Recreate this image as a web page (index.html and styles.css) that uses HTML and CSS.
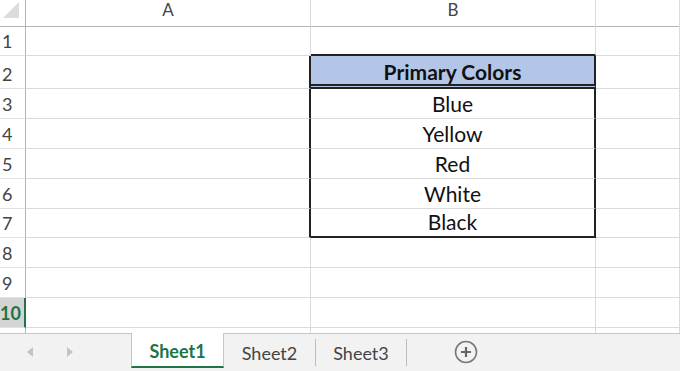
FILE: index.html
```html
<!DOCTYPE html>
<html lang="en">
<head>
  <meta charset="UTF-8" />
  <title>Primary Colors - Sheet1</title>
  <link rel="stylesheet" href="styles.css">
</head>
<body>

  <div class="app">

    <!-- worksheet grid -->
    <div class="sheet">
      <div class="row col-heads">
        <div class="cell corner">
          <svg width="18" height="18" viewBox="0 0 18 18"><polygon points="17,1 17,17 1,17" fill="#dcdcdc"/></svg>
        </div>
        <div class="cell col-head">A</div>
        <div class="cell col-head">B</div>
        <div class="cell col-head"></div>
      </div>

      <div class="row">
        <div class="cell row-head">1</div>
        <div class="cell"></div>
        <div class="cell box-top"></div>
        <div class="cell"></div>
      </div>

      <div class="row tall">
        <div class="cell row-head">2</div>
        <div class="cell box-left"></div>
        <div class="cell box title">Primary Colors</div>
        <div class="cell"></div>
      </div>

      <div class="row">
        <div class="cell row-head">3</div>
        <div class="cell box-left"></div>
        <div class="cell box">Blue</div>
        <div class="cell"></div>
      </div>

      <div class="row">
        <div class="cell row-head">4</div>
        <div class="cell box-left"></div>
        <div class="cell box">Yellow</div>
        <div class="cell"></div>
      </div>

      <div class="row">
        <div class="cell row-head">5</div>
        <div class="cell box-left"></div>
        <div class="cell box">Red</div>
        <div class="cell"></div>
      </div>

      <div class="row">
        <div class="cell row-head">6</div>
        <div class="cell box-left"></div>
        <div class="cell box">White</div>
        <div class="cell"></div>
      </div>

      <div class="row short">
        <div class="cell row-head">7</div>
        <div class="cell box-left"></div>
        <div class="cell box box-end">Black</div>
        <div class="cell"></div>
      </div>

      <div class="row">
        <div class="cell row-head">8</div>
        <div class="cell"></div>
        <div class="cell"></div>
        <div class="cell"></div>
      </div>

      <div class="row">
        <div class="cell row-head">9</div>
        <div class="cell"></div>
        <div class="cell"></div>
        <div class="cell"></div>
      </div>

      <div class="row">
        <div class="cell row-head active">10</div>
        <div class="cell"></div>
        <div class="cell"></div>
        <div class="cell"></div>
      </div>

      <div class="row">
        <div class="cell row-head"></div>
        <div class="cell"></div>
        <div class="cell"></div>
        <div class="cell"></div>
      </div>
    </div>

    <!-- sheet tabs -->
    <div class="tabs">
      <div class="tab-nav">
        <span class="arrow left"></span>
        <span class="arrow right"></span>
      </div>
      <div class="tab current">Sheet1</div>
      <div class="tab">Sheet2</div>
      <div class="tab sep">Sheet3</div>
      <div class="add-sheet">
        <svg width="24" height="24" viewBox="0 0 24 24">
          <circle cx="12" cy="12" r="10.5" fill="none" stroke="#7a7a7a" stroke-width="1.6"/>
          <path d="M12 7v10M7 12h10" stroke="#666" stroke-width="2.2"/>
        </svg>
      </div>
    </div>

  </div>

</body>
</html>
```

FILE: styles.css
```css
:root {
  --grid: #dadada;
  --head-line: #b4b4b4;
  --ink: #222;
  --green: #217346;
  --header-fill: #b4c6e7;
}

* {
  box-sizing: border-box;
}

body {
  margin: 0;
  font-family: Lato, 'Open Sans', sans-serif;
  background: #fff;
}

.app {
  display: flex;
  flex-direction: column;
  height: 371px;
  overflow: hidden;
}

.sheet {
  flex: 1;
  overflow: hidden;
}

.row {
  display: grid;
  grid-template-columns: 26px 285px 285px 1fr;
  height: 30px;
}

.row.tall {
  height: 33px;
}

.row.short {
  height: 29px;
}

.row.col-heads {
  height: 26px;
}

.cell {
  display: flex;
  align-items: flex-end;
  justify-content: center;
  padding-bottom: 4px;
  border-right: 1px solid var(--grid);
  border-bottom: 1px solid var(--grid);
  font-size: 21px;
  line-height: 20px;
  color: #111;
}

.col-heads .cell {
  border-bottom-color: var(--head-line);
}

.corner {
  align-items: flex-start;
  justify-content: flex-start;
  padding: 1px 0 0 2px;
  border-right-color: var(--head-line);
}

.col-head {
  font-size: 17px;
  color: #444;
  padding-bottom: 6px;
}

.row-head {
  justify-content: flex-start;
  padding-left: 2px;
  font-size: 18px;
  color: #444;
  border-right-color: var(--head-line);
  border-bottom-color: #e2e2e2;
}

.row-head.active {
  background: #d4d4d4;
  color: var(--green);
  font-weight: bold;
  padding-left: 0;
  border-right: 2px solid var(--green);
}

/* Primary Colors table */
.box-top {
  border-bottom: 2px solid var(--ink);
}

.box-left {
  border-right: 2px solid var(--ink);
}

.box {
  border-right: 2px solid var(--ink);
}

.box.title {
  background: var(--header-fill);
  font-weight: bold;
  border-bottom: 5px double var(--ink);
  padding-bottom: 2px;
}

.box.box-end {
  border-bottom: 2px solid var(--ink);
}

/* tab strip */
.tabs {
  height: 38px;
  flex-shrink: 0;
  display: flex;
  align-items: flex-start;
  background: #f2f2f2;
  border-top: 1px solid #c6c6c6;
  font-size: 18px;
  color: #444;
}

.tab-nav {
  width: 131px;
  height: 36px;
  display: flex;
  align-items: center;
  gap: 34px;
  padding-left: 27px;
}

.arrow {
  width: 0;
  height: 0;
  border-top: 5px solid transparent;
  border-bottom: 5px solid transparent;
}

.arrow.left {
  border-right: 6px solid #c4c4c4;
}

.arrow.right {
  border-left: 6px solid #c4c4c4;
}

.tab {
  width: 92px;
  height: 27px;
  margin-top: 5px;
  display: flex;
  align-items: center;
  justify-content: center;
  border-right: 1px solid #bdbdbd;
}

.tab.current {
  width: 93px;
  height: 35px;
  margin-top: -1px;
  padding-top: 3px;
  background: #fff;
  color: var(--green);
  font-weight: bold;
  border-left: 1px solid #c6c6c6;
  border-right: 1px solid #c6c6c6;
  border-bottom: 2px solid var(--green);
}

.tab.sep {
  width: 91px;
}

.add-sheet {
  margin: 6px 0 0 47px;
  display: flex;
}
```
